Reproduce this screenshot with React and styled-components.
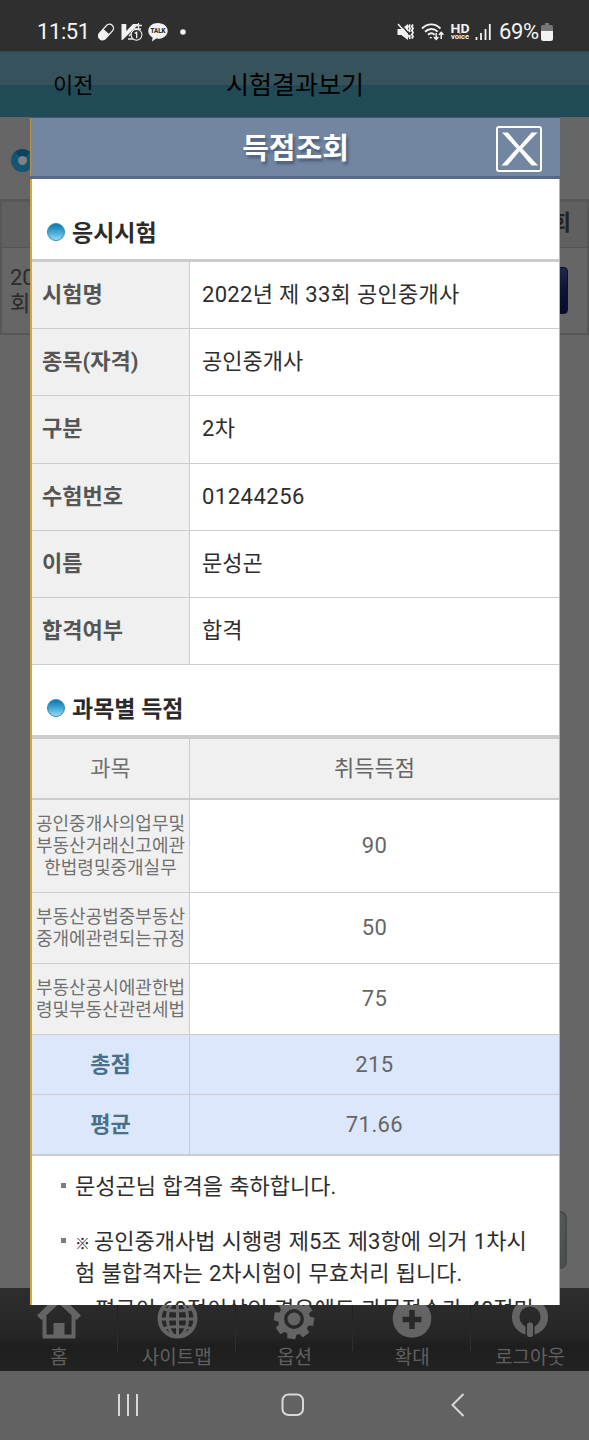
import React from 'react';
import styled, { createGlobalStyle } from 'styled-components';

const GlobalStyle = createGlobalStyle`
  * {
    box-sizing: border-box;
  }

  body {
    margin: 0;
    background: #666666;
    font-family: Roboto, 'Noto Sans CJK KR', sans-serif;
  }
`;

const Screen = styled.div`
  position: relative;
  width: 589px;
  height: 1440px;
  display: flex;
  flex-direction: column;
  overflow: hidden;
  background: #666666;
`;

const StatusBar = styled.div`
  height: 51px;
  flex: none;
  display: flex;
  justify-content: space-between;
  padding: 13px 36px 0 37px;
  background: #2f2f2f;
  color: #f4f4f4;
`;

const StatusGroup = styled.div`
  display: flex;
  align-items: center;
  height: 38px;
`;

const StatusText = styled.span`
  width: ${({ $width }) => $width}px;
  font-size: 22px;
  line-height: 38px;
  letter-spacing: -0.4px;
  white-space: nowrap;
`;

const StatusIcon = styled.svg`
  flex: none;
  margin-left: ${({ $gap }) => $gap || 0}px;
`;

const PageHeader = styled.header`
  height: 66px;
  flex: none;
  display: flex;
  align-items: center;
  justify-content: center;
  padding-top: 2px;
  border-top: 1px solid #2e464c;
  background: linear-gradient(#36525a 0 33px, #214b57 33px);
  color: #000;
`;

const BackLabel = styled.span`
  width: 173px;
  padding-left: 53px;
  font-size: 22px;
  line-height: 32px;
`;

const PageTitle = styled.h1`
  flex: 1;
  margin: 0;
  padding-left: 53px;
  font-size: 25px;
  font-weight: 400;
  line-height: 36px;
`;

const PageBody = styled.div`
  flex: 1;
  display: flex;
  flex-direction: column;
  background: #666666;
`;

const PageHeading = styled.div`
  height: 82px;
  padding: 32px 0 0 11px;
`;

const ListTable = styled.div`
  border: 2px solid #575757;
  border-top-width: 3px;
`;

const ListHead = styled.div`
  height: 46px;
  display: flex;
  align-items: center;
  justify-content: flex-end;
  padding: 0 16px 4px 0;
  border-bottom: 1px solid #555;
  background: #606060;
  color: #222;
  font-size: 22px;
  font-weight: 700;
  line-height: 32px;
`;

const ListRow = styled.div`
  height: 85px;
  display: flex;
  justify-content: space-between;
  align-items: center;
  padding: 0 19px 0 8px;
  color: #2b2b2b;
  font-size: 22px;
  line-height: 26px;
`;

const ViewButton = styled.div`
  width: 80px;
  height: 47px;
  border: 1px solid #0b1026;
  border-radius: 4px;
  background: linear-gradient(#20264a, #0d1433 50%, #070d2b);
`;

const ListButton = styled.div`
  width: 120px;
  height: 58px;
  margin: auto 22px 19px auto;
  border: 2px solid #484b4b;
  border-radius: 7px;
  background: linear-gradient(#555858, #4b4e4e);
`;

const TabBar = styled.nav`
  height: 83px;
  flex: none;
  display: flex;
  background: linear-gradient(#2e2e2e, #262626 55%, #1e1e1e 70%, #222);
`;

const Tab = styled.div`
  flex: 1;
  display: flex;
  flex-direction: column;
  align-items: center;
  padding-top: 9px;
  color: #606060;
  font-size: 19px;
  line-height: 26px;
  background: linear-gradient(#1f1f1f, #323232) right 17px / 1px 46px no-repeat;

  &:last-child {
    background: none;
  }

  svg {
    display: block;
    margin-bottom: 2px;
  }
`;

const NavBar = styled.div`
  height: 69px;
  flex: none;
  display: flex;
  justify-content: space-between;
  align-items: center;
  padding: 0 124px 2px 117px;
  background: #626262;
`;

const HomeButton = styled.span`
  display: flex;
  margin-right: 4px;
`;

const Modal = styled.section`
  position: absolute;
  left: 30px;
  top: 117px;
  width: 530px;
  height: 1188px;
  display: flex;
  flex-direction: column;
  overflow: hidden;
  background: #fff;
`;

const ModalHeader = styled.header`
  height: 62px;
  flex: none;
  display: grid;
  grid-template-columns: 66px 1fr 66px;
  align-items: center;
  border-top: 1px solid #45536f;
  border-bottom: 3px solid #566888;
  background: linear-gradient(90deg, #b99445 1px, #7286a1 1px);
`;

const ModalBody = styled.div`
  flex: 1;
  min-height: 0;
  overflow: hidden;
  border-left: 2px solid #d9a534;
  border-right: 1px solid #d2b46c;
`;

const ModalTitle = styled.h2`
  grid-column: 2;
  margin: 0;
  padding: 3px 0 0 1px;
  color: #fff;
  font-size: 29px;
  font-weight: 700;
  line-height: 40px;
  text-align: center;
  text-shadow: 2px 3px 3px rgba(40, 55, 85, 0.55);
`;

const CloseButton = styled.button`
  width: 46px;
  height: 46px;
  margin: 3px 0 0 2px;
  padding: 0;
  border: 2px solid #fff;
  border-radius: 3px;
  background: transparent;

  svg {
    display: block;
  }
`;

const SectionTitle = styled.h3`
  height: ${({ $height }) => $height}px;
  display: flex;
  align-items: center;
  gap: 7px;
  margin: 0;
  padding: ${({ $top }) => $top}px 0 0 15px;
  color: #2b2b2b;
  font-size: 23px;
  font-weight: 700;
  line-height: 32px;
`;

const Bullet = styled.i`
  width: 18px;
  height: 18px;
  margin-bottom: 3px;
  border: 1px solid #3486a8;
  border-radius: 50%;
  background: linear-gradient(#0878b0, #48abd6 55%, #9adcf3);
`;

const DimBullet = styled.i`
  display: block;
  width: 23px;
  height: 23px;
  border: 7px solid #155572;
  border-top-color: #0b4361;
  border-radius: 50%;
  background: #7c8386;
`;

const InfoTable = styled.dl`
  margin: 0;
  border-top: 3px solid #ccc;
`;

const InfoRow = styled.div`
  height: 67.2px;
  display: grid;
  grid-template-columns: 158px 1fr;
  border-bottom: 1px solid #ccc;
`;

const InfoLabel = styled.dt`
  padding: 17px 0 0 10px;
  border-right: 1px solid #ccc;
  background: #f0f0f0;
  color: #555;
  font-size: 22px;
  font-weight: 700;
  line-height: 32px;
`;

const InfoValue = styled.dd`
  margin: 0;
  padding: 17px 0 0 12px;
  color: #2d2d2d;
  font-size: 22px;
  line-height: 32px;
  letter-spacing: ${({ $spacing }) => $spacing || 0}px;
`;

const ScoreTable = styled.div`
  border-top: 4px solid #ccc;
  border-bottom: 1px solid #ccc;
`;

const ScoreRow = styled.div`
  height: ${({ $height }) => $height}px;
  display: grid;
  grid-template-columns: 158px 1fr;
  border-bottom: ${({ $head }) => ($head ? 2 : 1)}px solid #ccc;
  background: ${({ $sum, $head }) => ($sum ? '#dde7fb' : $head ? '#f0f0f0' : '#fff')};
`;

const ScoreCell = styled.div`
  display: flex;
  align-items: center;
  justify-content: center;
  padding-top: ${({ $shift }) => $shift || 0}px;
  color: #666;
  font-size: 22px;
  line-height: 32px;
`;

const Score = styled(ScoreCell)`
  letter-spacing: 0.4px;
`;

const SubjectCell = styled(ScoreCell)`
  border-right: 1px solid #ccc;
  background: ${({ $sum }) => ($sum ? 'transparent' : '#f0f0f0')};
  color: ${({ $sum }) => ($sum ? '#497089' : '#707070')};
  font-size: ${({ $small }) => ($small ? 18 : 22)}px;
  font-weight: ${({ $sum }) => ($sum ? 700 : 400)};
  line-height: ${({ $small }) => ($small ? 22 : 32)}px;
  text-align: center;
  white-space: pre;
`;

const Notes = styled.ul`
  margin: 0;
  padding: 15px 0 0 43px;
  color: #2d2d2d;
  font-size: 22px;
  line-height: 32px;
  list-style: none;
  white-space: pre;
  word-spacing: 0.8px;
`;

const Note = styled.li`
  position: relative;
  margin-top: ${({ $gap }) => $gap || 0}px;
  padding-left: ${({ $indent }) => $indent || 0}px;

  &::before {
    content: '';
    position: absolute;
    left: ${({ $indent }) => ($indent ? 5 : -14)}px;
    top: 12px;
    width: 5px;
    height: 5px;
    background: #7c7c7c;
  }
`;

const NoteMark = styled.span`
  margin-right: 4px;
  font-size: 15px;
  font-weight: 500;
  line-height: 18px;
`;

const exam = [
  ['시험명', '2022년 제 33회 공인중개사', 0.3],
  ['종목(자격)', '공인중개사'],
  ['구분', '2차', 0.4],
  ['수험번호', '01244256', 0.5],
  ['이름', '문성곤'],
  ['합격여부', '합격'],
];

const scores = [
  { subject: '공인중개사의업무및\n부동산거래신고에관\n한법령및중개실무', score: '90', height: 93 },
  { subject: '부동산공법중부동산\n중개에관련되는규정', score: '50', height: 71 },
  { subject: '부동산공시에관한법\n령및부동산관련세법', score: '75', height: 71 },
];

const sums = [
  ['총점', '215'],
  ['평균', '71.66'],
];

const PillIcon = () => (
  <StatusIcon width="18" height="20" viewBox="0 0 18 20" $gap={6}>
    <g transform="rotate(42 9 10)">
      <rect x="5" y="0.8" width="8" height="18.400" rx="4" fill="none" stroke="#f2f2f2" strokeWidth="1.300" />
      <path d="M5 9.500h8v5.700a4 4 0 0 1-8 0z" fill="#f2f2f2" />
    </g>
  </StatusIcon>
);

const VaccineIcon = () => (
  <StatusIcon width="22" height="20" viewBox="0 0 22 20" $gap={6}>
    <path d="M0.500 2h4.800v7L12 2h6L1.500 18H0.500z" fill="#f2f2f2" />
    <path d="M14 3.500h7M17.500 1v6M13 7h7M8 14l5-5M7 17h5" stroke="#e8e8e8" strokeWidth="1.300" fill="none" />
    <circle cx="15.500" cy="12.800" r="5.400" fill="#2f2f2f" stroke="#f2f2f2" strokeWidth="1.100" />
    <path d="M13.700 11.300l2-1v6" stroke="#f2f2f2" strokeWidth="1.300" fill="none" />
  </StatusIcon>
);

const TalkIcon = () => (
  <StatusIcon width="20" height="20" viewBox="0 0 20 20" $gap={5}>
    <path d="M10 1C4.500 1 .3 4.500 .3 8.900c0 2.800 1.700 5.200 4.300 6.600L4 19.500l4.200-2.900c.6.1 1.200.1 1.800.1 5.500 0 9.700-3.500 9.700-7.800S15.500 1 10 1z" fill="#f2f2f2" />
    <text x="10" y="11.400" fontSize="7" fontWeight="900" textAnchor="middle" textLength="15" lengthAdjust="spacingAndGlyphs" fill="#2f2f2f">TALK</text>
  </StatusIcon>
);

const MuteIcon = () => (
  <StatusIcon width="18" height="18" viewBox="0 0 18 18">
    <path d="M0.500 6h3.800L11 1v16l-6.700-5H.5z" fill="#f2f2f2" />
    <path d="M2 -0.500l12 13.500" stroke="#2f2f2f" strokeWidth="1.500" />
    <path d="M1 1l11.500 13" stroke="#f2f2f2" strokeWidth="1.500" />
    <path d="M13 1.500l-1 2 1 2-1 2 1 1.500M16 1.500l-1.200 2 1.200 2-1.200 2 1.200 2-1.200 2 1.200 2-1.200 2M13 12l-.5 2 .5 2" stroke="#f2f2f2" strokeWidth="1.800" fill="none" />
  </StatusIcon>
);

const WifiIcon = () => (
  <StatusIcon width="24" height="20" viewBox="0 0 24 20" $gap={6}>
    <path d="M1 6.500C6.500 1 14 1 19.500 6.500M4 9.700c3.800-3.700 9-3.700 12.700 0M7 12.700c2-1.900 4.600-1.900 6.600 0" stroke="#f2f2f2" strokeWidth="1.900" fill="none" />
    <path d="M8.300 15h3l-1.500 1.700z" fill="#f2f2f2" />
    <path d="M15.200 11v6M13 15l2.200 2.400 2.200-2.400M20.200 17v-6M18 12.800l2.200-2.400 2.200 2.400" stroke="#f2f2f2" strokeWidth="1.500" fill="none" />
  </StatusIcon>
);

const HdIcon = () => (
  <StatusIcon width="20" height="18" viewBox="0 0 20 18" $gap={5}>
    <text x="10" y="9.500" fontSize="12" fontWeight="700" textAnchor="middle" textLength="19" lengthAdjust="spacingAndGlyphs" fill="#f2f2f2">HD</text>
    <text x="10" y="16" fontSize="6.500" fontWeight="700" textAnchor="middle" textLength="18" lengthAdjust="spacingAndGlyphs" fill="#f2f2f2">voice</text>
  </StatusIcon>
);

const SignalIcon = () => (
  <StatusIcon width="16" height="18" viewBox="0 0 16 18" $gap={5}>
    <path d="M1.500 14v3M6 10v7M10.500 6v11M14.800 1v16" stroke="#f2f2f2" strokeWidth="1.800" />
  </StatusIcon>
);

const BatteryIcon = () => (
  <StatusIcon width="12" height="18" viewBox="0 0 12 18">
    <path d="M4 0h4v2h2.500Q12 2 12 4v5H0V4q0-2 1.500-2H4z" fill="#777" />
    <path d="M0 8h12v7.500Q12 18 9.500 18h-7Q0 18 0 15.500z" fill="#f2f2f2" />
  </StatusIcon>
);

const HomeIcon = () => (
  <svg width="46" height="46" viewBox="0 0 46 46">
    <path d="M1 18.500L20 0h6l19 18.500-4.500 4.500L23 6.500 5.500 23z" fill="#646464" />
    <path d="M8.500 19v20.500h29V19" fill="none" stroke="#646464" strokeWidth="4" />
    <path d="M17.500 26h11v14h-11z" fill="#646464" />
  </svg>
);

const GlobeIcon = () => (
  <svg width="46" height="46" viewBox="0 0 46 46" fill="none" stroke="#646464" strokeWidth="3">
    <circle cx="23.500" cy="21.500" r="18" strokeWidth="4" />
    <ellipse cx="23.500" cy="21.500" rx="10" ry="18" />
    <path d="M8 11.500q15.500 5 31 0M5 22h37M8 32q15.500-5 31 0M23.500 4v36" />
  </svg>
);

const GearIcon = () => (
  <svg width="46" height="46" viewBox="-23 -22 46 46">
    <g fill="#646464">
      {[0, 45, 90, 135, 180, 225, 270, 315].map((angle) => (
        <path key={angle} d="M-4-20h8l1 8H-5z" transform={`rotate(${angle + 8})`} />
      ))}
    </g>
    <circle r="13" fill="none" stroke="#646464" strokeWidth="6" />
    <circle r="6.500" fill="#646464" />
  </svg>
);

const ZoomIcon = () => (
  <svg width="46" height="46" viewBox="0 0 46 46">
    <circle cx="23" cy="21.500" r="19.300" fill="#646464" />
    <path d="M23 13v19M13.500 22.500h19" stroke="#292929" strokeWidth="5.500" />
  </svg>
);

const LogoutIcon = () => (
  <svg width="46" height="46" viewBox="0 0 46 46">
    <circle cx="23" cy="20" r="14.300" fill="none" stroke="#646464" strokeWidth="7.500" />
    <path d="M18.500 24h9v16h-9z" fill="#262626" />
    <rect x="20" y="25.500" width="6" height="14.500" rx="2.500" fill="#646464" />
  </svg>
);

const tabs = [
  ['홈', HomeIcon],
  ['사이트맵', GlobeIcon],
  ['옵션', GearIcon],
  ['확대', ZoomIcon],
  ['로그아웃', LogoutIcon],
];

const App = () => {
  return (
    <Screen>
      <GlobalStyle />
      <StatusBar>
        <StatusGroup>
          <StatusText $width={54}>11:51</StatusText>
          <PillIcon />
          <VaccineIcon />
          <TalkIcon />
          <StatusIcon width="6" height="6" viewBox="0 0 6 6" $gap={12}>
            <circle cx="3" cy="3" r="2.800" fill="#f2f2f2" />
          </StatusIcon>
        </StatusGroup>
        <StatusGroup>
          <MuteIcon />
          <WifiIcon />
          <HdIcon />
          <SignalIcon />
          <StatusIcon width="8" height="1" />
          <StatusText $width={42}>69%</StatusText>
          <BatteryIcon />
        </StatusGroup>
      </StatusBar>

      <PageHeader>
        <BackLabel>이전</BackLabel>
        <PageTitle>시험결과보기</PageTitle>
      </PageHeader>

      <PageBody>
        <PageHeading>
          <DimBullet />
        </PageHeading>
        <ListTable>
          <ListHead>조회</ListHead>
          <ListRow>
            <span>
              20
              <br />회
            </span>
            <ViewButton />
          </ListRow>
        </ListTable>
        <ListButton />
      </PageBody>

      <TabBar>
        {tabs.map(([label, Icon]) => (
          <Tab key={label}>
            <Icon />
            {label}
          </Tab>
        ))}
      </TabBar>

      <NavBar>
        <svg width="22" height="24" viewBox="0 0 22 24" stroke="#d8d8d8" strokeWidth="2">
          <path d="M2 1v22M11 1v22M20 1v22" />
        </svg>
        <HomeButton>
          <svg width="24" height="24" viewBox="0 0 24 24" fill="none" stroke="#d8d8d8" strokeWidth="2">
            <rect x="1.500" y="1.500" width="20.500" height="20.500" rx="6" />
          </svg>
        </HomeButton>
        <svg width="14" height="24" viewBox="0 0 14 24" fill="none" stroke="#d8d8d8" strokeWidth="2">
          <path d="M12.500 1L1.500 12l11 11" />
        </svg>
      </NavBar>

      <Modal>
        <ModalHeader>
          <ModalTitle>득점조회</ModalTitle>
          <CloseButton aria-label="닫기">
            <svg width="42" height="42" viewBox="0 0 42 42" fill="#fff">
              <path d="M4 4.500h6L21.500 18.200 33.500 4.500h6L24.300 20.500 40 37.500h-6.500L21.500 23.300 9.500 37.500h-6L18.700 20.500z" />
            </svg>
          </CloseButton>
        </ModalHeader>

        <ModalBody>
          <SectionTitle $height={80} $top={29}>
            <Bullet />
            응시시험
          </SectionTitle>
          <InfoTable>
            {exam.map(([label, value, spacing]) => (
              <InfoRow key={label}>
                <InfoLabel>{label}</InfoLabel>
                <InfoValue $spacing={spacing}>{value}</InfoValue>
              </InfoRow>
            ))}
          </InfoTable>

          <SectionTitle $height={70} $top={19}>
            <Bullet />
            과목별 득점
          </SectionTitle>
          <ScoreTable>
            <ScoreRow $height={61} $head>
              <SubjectCell $shift={1}>과목</SubjectCell>
              <ScoreCell $shift={1}>취득득점</ScoreCell>
            </ScoreRow>
            {scores.map(({ subject, score, height }) => (
              <ScoreRow key={subject} $height={height}>
                <SubjectCell $small>{subject}</SubjectCell>
                <Score>{score}</Score>
              </ScoreRow>
            ))}
            {sums.map(([label, score]) => (
              <ScoreRow key={label} $height={60} $sum>
                <SubjectCell $shift={1} $sum>{label}</SubjectCell>
                <Score $shift={1}>{score}</Score>
              </ScoreRow>
            ))}
          </ScoreTable>

          <Notes>
            <Note>문성곤님 합격을 축하합니다.</Note>
            <Note $gap={23}>
              <NoteMark>※</NoteMark>
              {'공인중개사법 시행령 제5조 제3항에 의거 1차시\n험 불합격자는 2차시험이 무효처리 됩니다.'}
            </Note>
            <Note $gap={4} $indent={20}>평균이 60점이상인 경우에도 과목점수가 40점미</Note>
          </Notes>
        </ModalBody>
      </Modal>
    </Screen>
  );
};

export default App;
